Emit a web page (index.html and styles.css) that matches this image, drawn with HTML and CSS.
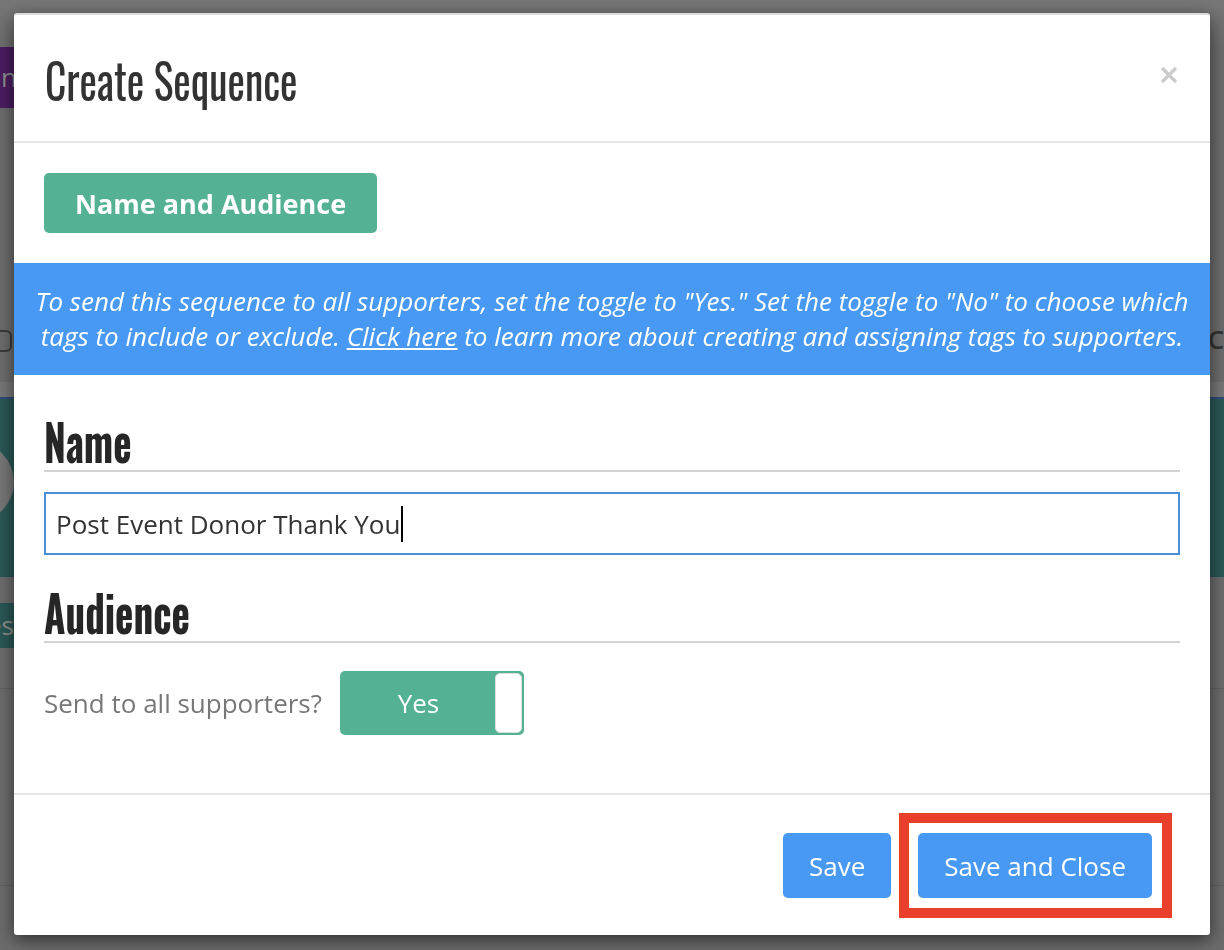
FILE: index.html
```html
<!DOCTYPE html>
<html lang="en">
<head>
    <meta charset="UTF-8">
    <meta name="viewport" content="width=device-width, initial-scale=1.0">
    <title>Create Sequence</title>
    <link rel="stylesheet" href="styles.css">
</head>
<body>
    <!-- page behind the dialog (already dimmed) -->
    <div class="page">
        <div class="page-top"></div>
        <div class="page-nav"><span class="nav-btn">nn</span></div>
        <div class="page-tools">
            <span class="tool-box"></span>
            <span class="tool-text">Co</span>
        </div>
        <div class="page-tabs"></div>
        <div class="page-hero"><span class="hero-circle"></span></div>
        <div class="page-actions"><span class="action-btn">es</span></div>
        <div class="page-row"></div>
        <div class="page-row tall"></div>
    </div>

    <div class="modal-backdrop">
        <div class="modal">
            <div class="modal-header">
                <h4 class="modal-title"><span>Create Sequence</span></h4>
                <button class="close" aria-label="Close">
                    <svg width="18" height="18" viewBox="0 0 18 18">
                        <path d="M2 2 L16 16 M16 2 L2 16" stroke="#cbcbcb" stroke-width="3.2" stroke-linecap="butt"/>
                    </svg>
                </button>
            </div>

            <div class="modal-body">
                <div class="steps">
                    <button class="step active">Name and Audience</button>
                </div>

                <p class="info-banner">
                    To send this sequence to all supporters, set the toggle to "Yes." Set the toggle to "No" to choose which
                    tags to include or exclude. <a href="#">Click here</a> to learn more about creating and assigning tags to supporters.
                </p>

                <div class="form">
                    <h3 class="section-title"><span>Name</span></h3>
                    <div class="text-field">Post Event Donor Thank You<span class="caret"></span></div>

                    <h3 class="section-title"><span>Audience</span></h3>
                    <div class="toggle-row">
                        <label>Send to all supporters?</label>
                        <div class="toggle on">
                            <span class="toggle-label">Yes</span>
                            <span class="toggle-handle"></span>
                        </div>
                    </div>
                </div>
            </div>

            <div class="modal-footer">
                <button class="btn">Save</button>
                <div class="highlight">
                    <button class="btn">Save and Close</button>
                </div>
            </div>
        </div>
    </div>
</body>
</html>
```

FILE: styles.css
```css
* {
    box-sizing: border-box;
}

body {
    margin: 0;
    height: 950px;
    overflow: hidden;
    background-color: #6c6c6c;
    font-family: "Open Sans", "Liberation Sans", sans-serif;
    color: #333;
}

/* ---- dimmed page underneath ---- */
.page-top {
    height: 47px;
    background: linear-gradient(#777, #6e6e6e);
}

.page-nav {
    height: 61px;
}

.nav-btn {
    display: inline-block;
    width: 120px;
    height: 61px;
    padding-left: 1px;
    background-color: #4a1d60;
    color: #8c8c8c;
    font-size: 26px;
    line-height: 61px;
}

.page-tools {
    height: 274px;
    display: flex;
    justify-content: space-between;
    align-items: flex-end;
    padding-bottom: 30px;
}

.tool-box {
    width: 60px;
    height: 22px;
    margin-left: -48px;
    border: 2px solid #3a3a3a;
    border-radius: 6px;
}

.tool-text {
    margin-right: -16px;
    color: #333;
    font-size: 26px;
    font-weight: 600;
    line-height: 1;
}

.page-tabs {
    height: 15px;
    background-color: #777;
}

.page-hero {
    height: 180px;
    padding-top: 43px;
    background-color: #2a5755;
    border-top: 2px solid #2c4c7c;
}

.hero-circle {
    display: block;
    width: 80px;
    height: 80px;
    margin-left: -66px;
    border-radius: 50%;
    background-color: #777;
}

.page-actions {
    height: 111px;
    padding-top: 26px;
}

.action-btn {
    display: block;
    width: 60px;
    height: 45px;
    margin-left: -44px;
    padding-right: 2px;
    background-color: #2a5755;
    color: #8d8d8d;
    font-size: 26px;
    line-height: 45px;
    text-align: right;
}

.page-row {
    height: 1px;
    background-color: #626262;
}

.page-row.tall {
    margin-top: 196px;
}

/* ---- dialog ---- */
.modal-backdrop {
    position: fixed;
    top: 0;
    left: 0;
    right: 0;
    bottom: 0;
    display: flex;
    justify-content: center;
    align-items: flex-start;
    padding-top: 13px;
}

.modal {
    width: 1196px;
    background-color: #fff;
    border-top: 2px solid #dcdcdc;
    border-radius: 3px;
    box-shadow: 0 5px 18px rgba(0, 0, 0, 0.55);
}

.modal-header {
    height: 128px;
    display: flex;
    justify-content: space-between;
    align-items: center;
    padding: 0 32px 0 31px;
    border-bottom: 2px solid #e5e5e5;
}

.modal-title {
    margin: 0;
    font-family: "Oswald", "Liberation Sans Narrow", "DejaVu Sans Condensed", sans-serif;
    font-weight: 400;
    font-size: 50px;
    line-height: 1;
    color: #333;
}

.modal-title span,
.section-title span {
    display: inline-block;
    transform: scaleX(0.78);
    transform-origin: left center;
}

.modal-title span {
    transform: scaleX(0.83);
}

.close {
    margin-top: -6px;
    padding: 0;
    border: none;
    background: none;
    width: 18px;
    height: 18px;
    cursor: pointer;
}

.close svg {
    display: block;
}

.steps {
    padding: 30px;
}

.step {
    height: 60px;
    padding: 0 31px;
    border: none;
    border-radius: 5px;
    background-color: #55b194;
    color: #fff;
    font-family: "Open Sans", sans-serif;
    font-size: 27px;
    font-weight: 700;
}

.info-banner {
    margin: 0;
    padding: 21px 20px;
    background-color: #4899f4;
    color: #fff;
    font-size: 26px;
    font-style: italic;
    line-height: 35px;
    text-align: center;
}

.info-banner a {
    color: #fff;
    text-decoration: underline;
}

.form {
    padding: 0 30px 58px;
}

.section-title {
    margin: 40px 0 0;
    padding-bottom: 5px;
    border-bottom: 2px solid #d3d3d3;
    font-family: "Oswald", "Liberation Sans Narrow", "DejaVu Sans Condensed", sans-serif;
    font-size: 50px;
    font-weight: 700;
    line-height: 50px;
    color: #262626;
}

.text-field {
    margin-top: 20px;
    height: 63px;
    display: flex;
    align-items: center;
    padding: 0 10px;
    border: 2px solid #4b90d9;
    font-size: 26px;
    color: #333;
}

.caret {
    width: 2px;
    height: 36px;
    margin-left: 1px;
    background-color: #000;
}

.text-field + .section-title {
    margin-top: 31px;
}

.toggle-row {
    margin-top: 28px;
    display: flex;
    align-items: center;
    gap: 18px;
}

.toggle-row label {
    font-size: 26px;
    color: #777;
}

.toggle {
    width: 184px;
    height: 64px;
    display: flex;
    padding: 2px;
    border-radius: 5px;
    background-color: #55b194;
}

.toggle-label {
    flex: 1;
    display: flex;
    align-items: center;
    justify-content: center;
    color: #fff;
    font-size: 26px;
}

.toggle-handle {
    width: 27px;
    border: 1px solid #ddd;
    border-radius: 5px;
    background-color: #fff;
}

.modal-footer {
    display: flex;
    justify-content: flex-end;
    align-items: center;
    gap: 8px;
    padding: 18px 38px 17px;
    border-top: 2px solid #e5e5e5;
}

.btn {
    height: 65px;
    padding: 0 26px;
    border: none;
    border-radius: 5px;
    background-color: #4899f4;
    color: #fff;
    font-family: "Open Sans", sans-serif;
    font-size: 26px;
    cursor: pointer;
}

.highlight {
    padding: 10px 10px 10px 9px;
    border: 10px solid #e8402a;
}
```
